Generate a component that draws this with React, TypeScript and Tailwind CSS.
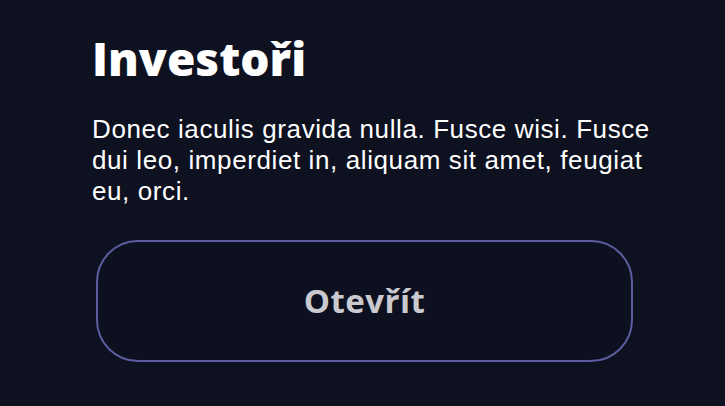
export default function App() {
  return (
    <div className="min-h-[406px] w-full bg-[#0e1120] px-[92px] pt-[28px]">
      <div className="w-[580px]">
        <h1 className="font-['Open_Sans',sans-serif] text-[46px] font-extrabold leading-[60px] text-white">
          Investoři
        </h1>
        <p className="mt-[26px] font-['Liberation_Sans',Arial,sans-serif] text-[26px] leading-[31px] tracking-[0.6px] text-white">
          Donec iaculis gravida nulla. Fusce wisi. Fusce dui leo, imperdiet in, aliquam sit amet, feugiat eu, orci.
        </p>
        <button className="ml-[4px] mt-[33px] flex h-[122px] w-[537px] items-center justify-center rounded-[42px] border-2 border-[#5d5c9f] bg-[#0d101e] font-['Open_Sans',sans-serif] text-[33px] font-bold tracking-[0.5px] text-[#c9c9cf]">
          Otevřít
        </button>
      </div>
    </div>
  )
}
